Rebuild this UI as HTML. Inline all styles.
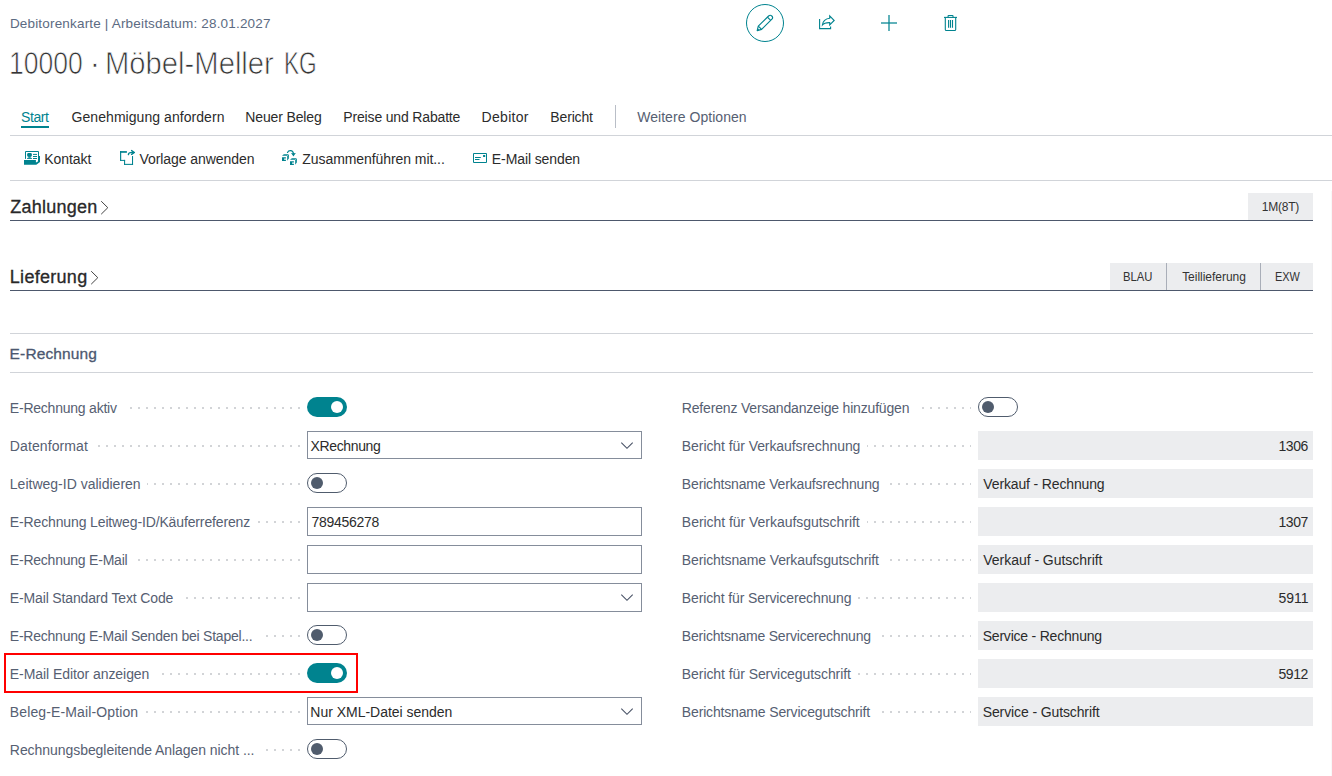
<!DOCTYPE html>
<html lang="de"><head><meta charset="utf-8"><title>Debitorenkarte</title>
<style>
html,body{margin:0;padding:0;background:#fff;}
body{width:1332px;height:776px;position:relative;overflow:hidden;font-family:"Liberation Sans",sans-serif;}
.t{position:absolute;white-space:nowrap;line-height:20px;margin:0;padding:0;}
.b{position:absolute;}
.ln{position:absolute;height:1px;}
.dots{position:absolute;height:2px;background-image:linear-gradient(to right,#d2d4d7 0,#d2d4d7 2px,transparent 2px,transparent 8px);background-size:8px 2px;background-repeat:repeat-x;}
.inp{position:absolute;box-sizing:border-box;border:1px solid #858d9b;background:#fff;height:28px;width:335px;}
.ro{position:absolute;background:#ecedef;height:29px;width:335px;}
.tg{position:absolute;box-sizing:border-box;width:40px;height:20px;border-radius:10px;}
.tg.on{background:#00838f;}
.tg.off{background:#fff;border:1px solid #505c6d;}
.tg i{position:absolute;width:12px;height:12px;border-radius:50%;top:4px;}
.tg.on i{background:#fff;left:24px;}
.tg.off i{background:#505c6d;left:3px;top:3px;}
.chip{position:absolute;background:#ecedef;}
svg{position:absolute;overflow:visible;}
</style></head><body>
<div class="ln" style="left:10px;top:135px;width:1322px;background:#d1d4d9"></div>
<div class="ln" style="left:10px;top:180px;width:1322px;background:#d1d4d9"></div>
<div class="b" style="left:1331px;top:191px;width:1px;height:585px;background:#f8f8f8"></div>
<div class="ln" style="left:10px;top:220px;width:1303px;background:#4d586c"></div>
<div class="ln" style="left:10px;top:290px;width:1303px;background:#4d586c"></div>
<div class="ln" style="left:10px;top:333px;width:1303px;background:#d1d4d9"></div>
<div class="ln" style="left:10px;top:372px;width:1303px;background:#d1d4d9"></div>
<div class="b" style="left:21px;top:126px;width:28px;height:2px;background:#00838f"></div>
<div class="b" style="left:615px;top:105px;width:1px;height:23px;background:#b9bec7"></div>
<div class="chip" style="left:1248px;top:193px;width:65px;height:27px"></div>
<div class="chip" style="left:1110px;top:263px;width:203px;height:27px"></div>
<div class="b" style="left:1166px;top:263px;width:1px;height:27px;background:#a9aeb8"></div>
<div class="b" style="left:1260px;top:263px;width:1px;height:27px;background:#a9aeb8"></div>
<div class="dots" style="left:124px;top:407px;width:176px;background-position:6px 0"></div>
<div class="dots" style="left:95px;top:445px;width:205px;background-position:3px 0"></div>
<div class="dots" style="left:147px;top:483px;width:153px;background-position:7px 0"></div>
<div class="dots" style="left:257px;top:521px;width:43px;background-position:1px 0"></div>
<div class="dots" style="left:134px;top:559px;width:166px;background-position:4px 0"></div>
<div class="dots" style="left:180px;top:597px;width:120px;background-position:6px 0"></div>
<div class="dots" style="left:264px;top:635px;width:36px;background-position:2px 0"></div>
<div class="dots" style="left:156px;top:673px;width:144px;background-position:6px 0"></div>
<div class="dots" style="left:144px;top:711px;width:156px;background-position:2px 0"></div>
<div class="dots" style="left:264px;top:749px;width:36px;background-position:2px 0"></div>
<div class="dots" style="left:916px;top:407px;width:55px;background-position:6px 0"></div>
<div class="dots" style="left:867px;top:445px;width:104px;background-position:7px 0"></div>
<div class="dots" style="left:886px;top:483px;width:85px;background-position:4px 0"></div>
<div class="dots" style="left:867px;top:521px;width:104px;background-position:7px 0"></div>
<div class="dots" style="left:886px;top:559px;width:85px;background-position:4px 0"></div>
<div class="dots" style="left:858px;top:597px;width:113px;background-position:0px 0"></div>
<div class="dots" style="left:877px;top:635px;width:94px;background-position:5px 0"></div>
<div class="dots" style="left:858px;top:673px;width:113px;background-position:0px 0"></div>
<div class="dots" style="left:877px;top:711px;width:94px;background-position:5px 0"></div>
<div class="tg on" style="left:307px;top:397px"><i></i></div>
<div class="tg off" style="left:307px;top:473px"><i></i></div>
<div class="tg off" style="left:307px;top:625px"><i></i></div>
<div class="tg on" style="left:307px;top:663px"><i></i></div>
<div class="tg off" style="left:307px;top:739px"><i></i></div>
<div class="tg off" style="left:978px;top:397px"><i></i></div>
<div class="inp" style="left:307px;top:431px;height:28px"></div>
<div class="inp" style="left:307px;top:507px;height:29px"></div>
<div class="inp" style="left:307px;top:545px;height:29px"></div>
<div class="inp" style="left:307px;top:583px;height:29px"></div>
<div class="inp" style="left:307px;top:697px;height:28px"></div>
<svg style="left:620.1px;top:441px" width="14" height="9" viewBox="0 0 14 9"><path d="M1.3,1.6 L7,7.3 L12.7,1.6" fill="none" stroke="#465064" stroke-width="1.05"/></svg>
<svg style="left:620.1px;top:593px" width="14" height="9" viewBox="0 0 14 9"><path d="M1.3,1.6 L7,7.3 L12.7,1.6" fill="none" stroke="#465064" stroke-width="1.05"/></svg>
<svg style="left:620.1px;top:707px" width="14" height="9" viewBox="0 0 14 9"><path d="M1.3,1.6 L7,7.3 L12.7,1.6" fill="none" stroke="#465064" stroke-width="1.05"/></svg>
<div class="ro" style="left:978px;top:431px"></div>
<div class="ro" style="left:978px;top:469px"></div>
<div class="ro" style="left:978px;top:507px"></div>
<div class="ro" style="left:978px;top:545px"></div>
<div class="ro" style="left:978px;top:583px"></div>
<div class="ro" style="left:978px;top:621px"></div>
<div class="ro" style="left:978px;top:659px"></div>
<div class="ro" style="left:978px;top:697px"></div>
<div class="b" style="left:4px;top:653px;width:354px;height:40px;box-sizing:border-box;border:2px solid #ff0000"></div>
<!-- header icons -->
<div class="b" style="left:746px;top:4px;width:38px;height:38px;box-sizing:border-box;border:1px solid #00838f;border-radius:50%"></div>
<svg style="left:757px;top:15px" width="16" height="16" viewBox="0 0 16 16"><g fill="none" stroke="#00838f" stroke-width="1.15" stroke-linejoin="round"><path d="M0.2,15.6 L1.3,11.1 L11.6,1.0 A2.3,2.3 0 0 1 14.9,4.2 L4.6,14.4 Z"/><path d="M1.3,11.1 L4.6,14.4"/><path d="M10.4,2.2 L13.7,5.4"/></g><path d="M0.2,15.6 L0.75,13.4 L2.4,15.0 Z" fill="#00838f"/></svg>
<svg style="left:819px;top:15px" width="16" height="15" viewBox="0 0 16 15"><g fill="none" stroke="#00838f" stroke-width="1.1" stroke-linejoin="miter"><path d="M0.6,4 V13.6 H11.6 V11.4"/><path d="M10.7,0.8 L15.2,5.5 L10.7,10.0 V7.6 C7.2,7.5 4.8,8.2 3.4,10.0 C3.6,6.4 6.6,3.5 10.7,3.3 Z"/></g></svg>
<svg style="left:880px;top:14px" width="18" height="18" viewBox="0 0 18 18"><g fill="none" stroke="#00838f" stroke-opacity="0.62" stroke-width="2"><path d="M1,9 H17"/><path d="M9,1 V17"/></g></svg>
<svg style="left:944px;top:15px" width="13" height="16" viewBox="0 0 13 16"><g fill="none" stroke="#00838f" stroke-width="1.1"><path d="M0,2.4 H13"/><path d="M4.1,2.4 V1 Q4.1,0.5 4.6,0.5 H8.5 Q9,0.5 9,1 V2.4"/><path d="M1.3,2.4 V14.4 Q1.3,15.5 2.4,15.5 H10.6 Q11.7,15.5 11.7,14.4 V2.4"/><path d="M4.6,5 V12.7 M6.5,5 V12.7 M8.5,5 V12.7"/></g></svg>
<!-- action icons -->
<svg style="left:24px;top:151px" width="16" height="14" viewBox="0 0 16 14"><path d="M1.5,7.9 V0.5 H14.5 V10" fill="none" stroke="#00838f" stroke-width="1"/><g fill="#00838f"><rect x="3.2" y="2.1" width="4.6" height="3.6" rx="1.2"/><rect x="4.3" y="5.2" width="2.4" height="1.6"/><rect x="3.1" y="6.9" width="4.8" height="1"/><rect x="9" y="2.9" width="4" height="1"/><rect x="9" y="5" width="4" height="1"/><rect x="9" y="7" width="4" height="1"/><path d="M0,9 H11.9 V11.2 H12.9 L15,9.3 V5 H16 V10.9 L12.3,13.8 H0 Z"/></g></svg>
<svg style="left:120px;top:150px" width="16" height="15" viewBox="0 0 16 15"><g fill="#00838f"><rect x="0" y="1.1" width="6.9" height="1.7"/><rect x="0.05" y="1.1" width="1.15" height="9.8"/><rect x="0.05" y="9.9" width="5.05" height="1"/><rect x="4.05" y="9.9" width="1.05" height="5"/><rect x="4.05" y="13.85" width="9" height="1.05"/><rect x="12" y="6.05" width="1.05" height="8.85"/></g><g fill="none" stroke="#00838f" stroke-width="1.4" stroke-linecap="round" stroke-linejoin="round"><path d="M8.4,4.6 Q8.6,2.6 10.6,2.6 H13.6"/><path d="M11.6,0.6 L14.4,2.5 L11.6,4.3"/></g></svg>
<svg style="left:282px;top:150px" width="16" height="15" viewBox="0 0 16 15"><g fill="#00838f"><path d="M0,5.7 L1.9,4.2 H5.7 Q6.9,4.2 6.9,5.4 L6.8,8.5 L5.2,10.7 V5.7 Z"/><path d="M0,7.2 H3.9 V8.5 H2.1 V9.7 H3.9 V10.9 H0 Z"/><path d="M8,9.7 L9.9,8.2 H13.7 Q14.9,8.2 14.9,9.4 L14.8,12.5 L13.2,14.7 V9.7 Z"/><path d="M8,11.2 H11.9 V12.5 H10.1 V13.7 H11.9 V14.9 H8 Z"/><path d="M9.1,3 L10.3,2.9 L11.4,4.1 L12.6,2.9 L13.8,3 L11.4,6.6 Z"/></g><circle cx="5.55" cy="5.45" r="0.45" fill="#fff"/><circle cx="13.55" cy="9.45" r="0.45" fill="#fff"/><path d="M5.5,2.4 C6.6,0.1 10.9,-0.3 11.4,3.4 V4.6" fill="none" stroke="#00838f" stroke-width="1.2" stroke-linecap="round"/></svg>
<svg style="left:473px;top:153px" width="14" height="10" viewBox="0 0 14 10"><path d="M0.5,0.5 H13.5 V9.5 H0.5 Z" fill="none" stroke="#00838f" stroke-width="1"/><rect x="10.1" y="2" width="2.1" height="2" fill="#00838f"/><path d="M2,4.5 H7.8 M2,6.5 H6.5" stroke="#00838f" stroke-width="1" fill="none"/></svg>
<!-- section chevrons -->
<svg style="left:100px;top:200px" width="10" height="16" viewBox="0 0 10 16"><path d="M1.2,1.2 L7.8,7.7 L1.2,14.2" fill="none" stroke="#444" stroke-width="1"/></svg>
<svg style="left:90px;top:270px" width="10" height="16" viewBox="0 0 10 16"><path d="M1.2,1.2 L7.8,7.7 L1.2,14.2" fill="none" stroke="#444" stroke-width="1"/></svg>

<span class="t" id="t0" style="left:9.90px;top:14.32px;font-size:13.5px;color:#5c6b82;letter-spacing:0.179px;">Debitorenkarte | Arbeitsdatum: 28.01.2027</span>
<span class="t" id="t1" style="left:8.82px;top:53.63px;font-size:30.8px;color:#353535;letter-spacing:0.000px;transform:scaleX(0.8620);transform-origin:0 0;-webkit-text-stroke:0.75px #fff;">10000</span>
<span class="t" id="t2" style="left:89.73px;top:53.63px;font-size:30.8px;color:#353535;letter-spacing:-6.299px;-webkit-text-stroke:0.6px #fff;">·</span>
<span class="t" id="t3" style="left:104.73px;top:53.63px;font-size:30.8px;color:#353535;letter-spacing:0.000px;transform:scaleX(0.9486);transform-origin:0 0;-webkit-text-stroke:0.75px #fff;">Möbel-Meller</span>
<span class="t" id="t4" style="left:283.92px;top:53.63px;font-size:30.8px;color:#353535;letter-spacing:0.000px;transform:scaleX(0.7357);transform-origin:0 0;-webkit-text-stroke:0.75px #fff;">KG</span>
<span class="t" id="t5" style="left:21.00px;top:107.15px;font-size:14px;color:#00838f;letter-spacing:-0.412px;">Start</span>
<span class="t" id="t6" style="left:71.59px;top:107.15px;font-size:14px;color:#2b2b2b;letter-spacing:0.056px;">Genehmigung anfordern</span>
<span class="t" id="t7" style="left:245.33px;top:107.15px;font-size:14px;color:#2b2b2b;letter-spacing:-0.144px;">Neuer Beleg</span>
<span class="t" id="t8" style="left:343.33px;top:107.15px;font-size:14px;color:#2b2b2b;letter-spacing:-0.166px;">Preise und Rabatte</span>
<span class="t" id="t9" style="left:481.52px;top:107.15px;font-size:14px;color:#2b2b2b;letter-spacing:0.310px;">Debitor</span>
<span class="t" id="t10" style="left:550.33px;top:107.15px;font-size:14px;color:#2b2b2b;letter-spacing:-0.155px;">Bericht</span>
<span class="t" id="t11" style="left:637.16px;top:107.15px;font-size:14px;color:#566072;letter-spacing:0.052px;">Weitere Optionen</span>
<span class="t" id="t12" style="left:44.33px;top:149.15px;font-size:14px;color:#2b2b2b;letter-spacing:-0.087px;">Kontakt</span>
<span class="t" id="t13" style="left:139.44px;top:149.15px;font-size:14px;color:#2b2b2b;letter-spacing:-0.060px;">Vorlage anwenden</span>
<span class="t" id="t14" style="left:302.37px;top:149.15px;font-size:14px;color:#2b2b2b;letter-spacing:-0.074px;">Zusammenführen mit...</span>
<span class="t" id="t15" style="left:491.85px;top:149.15px;font-size:14px;color:#2b2b2b;letter-spacing:-0.102px;">E-Mail senden</span>
<span class="t" id="t16" style="left:10.17px;top:196.76px;font-size:18px;color:#2b2b2b;letter-spacing:0.254px;-webkit-text-stroke:0.3px #212121;">Zahlungen</span>
<span class="t" id="t17" style="left:9.80px;top:266.76px;font-size:18px;color:#2b2b2b;letter-spacing:0.286px;-webkit-text-stroke:0.3px #212121;">Lieferung</span>
<span class="t" id="t18" style="left:9.62px;top:343.63px;font-size:15.5px;color:#4c5870;letter-spacing:0.134px;-webkit-text-stroke:0.3px #4c5870;">E-Rechnung</span>
<span class="t" id="t19" style="left:1261.83px;top:197.34px;font-size:12px;color:#333;letter-spacing:-0.245px;">1M(8T)</span>
<span class="t" id="t20" style="left:1123.48px;top:267.34px;font-size:12px;color:#333;letter-spacing:0.000px;transform:scaleX(0.9381);transform-origin:0 0;">BLAU</span>
<span class="t" id="t21" style="left:1182.15px;top:267.34px;font-size:12px;color:#333;letter-spacing:-0.019px;">Teillieferung</span>
<span class="t" id="t22" style="left:1274.63px;top:267.34px;font-size:12px;color:#333;letter-spacing:0.000px;transform:scaleX(0.9096);transform-origin:0 0;">EXW</span>
<span class="t" id="t23" style="left:9.84px;top:398.15px;font-size:14px;color:#566072;letter-spacing:-0.223px;">E-Rechnung aktiv</span>
<span class="t" id="t24" style="left:9.84px;top:436.15px;font-size:14px;color:#566072;letter-spacing:0.097px;">Datenformat</span>
<span class="t" id="t25" style="left:9.84px;top:474.15px;font-size:14px;color:#566072;letter-spacing:0.004px;">Leitweg-ID validieren</span>
<span class="t" id="t26" style="left:9.84px;top:512.15px;font-size:14px;color:#566072;letter-spacing:-0.134px;">E-Rechnung Leitweg-ID/Käuferreferenz</span>
<span class="t" id="t27" style="left:9.84px;top:550.15px;font-size:14px;color:#566072;letter-spacing:-0.224px;">E-Rechnung E-Mail</span>
<span class="t" id="t28" style="left:9.84px;top:588.15px;font-size:14px;color:#566072;letter-spacing:-0.149px;">E-Mail Standard Text Code</span>
<span class="t" id="t29" style="left:9.84px;top:626.15px;font-size:14px;color:#566072;letter-spacing:-0.232px;">E-Rechnung E-Mail Senden bei Stapel...</span>
<span class="t" id="t30" style="left:9.84px;top:664.15px;font-size:14px;color:#566072;letter-spacing:-0.062px;">E-Mail Editor anzeigen</span>
<span class="t" id="t31" style="left:9.84px;top:702.15px;font-size:14px;color:#566072;letter-spacing:0.126px;">Beleg-E-Mail-Option</span>
<span class="t" id="t32" style="left:9.84px;top:740.15px;font-size:14px;color:#566072;letter-spacing:-0.056px;">Rechnungsbegleitende Anlagen nicht ...</span>
<span class="t" id="t33" style="left:681.84px;top:398.15px;font-size:14px;color:#566072;letter-spacing:-0.178px;">Referenz Versandanzeige hinzufügen</span>
<span class="t" id="t34" style="left:681.84px;top:436.15px;font-size:14px;color:#566072;letter-spacing:-0.073px;">Bericht für Verkaufsrechnung</span>
<span class="t" id="t35" style="left:681.84px;top:474.15px;font-size:14px;color:#566072;letter-spacing:-0.162px;">Berichtsname Verkaufsrechnung</span>
<span class="t" id="t36" style="left:681.84px;top:512.15px;font-size:14px;color:#566072;letter-spacing:-0.037px;">Bericht für Verkaufsgutschrift</span>
<span class="t" id="t37" style="left:681.84px;top:550.15px;font-size:14px;color:#566072;letter-spacing:-0.123px;">Berichtsname Verkaufsgutschrift</span>
<span class="t" id="t38" style="left:681.84px;top:588.15px;font-size:14px;color:#566072;letter-spacing:-0.121px;">Bericht für Servicerechnung</span>
<span class="t" id="t39" style="left:681.84px;top:626.15px;font-size:14px;color:#566072;letter-spacing:-0.199px;">Berichtsname Servicerechnung</span>
<span class="t" id="t40" style="left:681.84px;top:664.15px;font-size:14px;color:#566072;letter-spacing:-0.074px;">Bericht für Servicegutschrift</span>
<span class="t" id="t41" style="left:681.84px;top:702.15px;font-size:14px;color:#566072;letter-spacing:-0.160px;">Berichtsname Servicegutschrift</span>
<span class="t" id="t42" style="left:310.62px;top:436.15px;font-size:14px;color:#2b2b2b;letter-spacing:-0.376px;">XRechnung</span>
<span class="t" id="t43" style="left:311.41px;top:512.15px;font-size:14px;color:#2b2b2b;letter-spacing:-0.270px;">789456278</span>
<span class="t" id="t44" style="left:310.33px;top:702.15px;font-size:14px;color:#2b2b2b;letter-spacing:-0.017px;">Nur XML-Datei senden</span>
<span class="t" id="t45" style="left:1278.38px;top:436.15px;font-size:14px;color:#2b2b2b;letter-spacing:-0.395px;">1306</span>
<span class="t" id="t46" style="left:983.32px;top:474.15px;font-size:14px;color:#2b2b2b;letter-spacing:-0.141px;">Verkauf - Rechnung</span>
<span class="t" id="t47" style="left:1278.38px;top:512.15px;font-size:14px;color:#2b2b2b;letter-spacing:-0.386px;">1307</span>
<span class="t" id="t48" style="left:983.32px;top:550.15px;font-size:14px;color:#2b2b2b;letter-spacing:-0.036px;">Verkauf - Gutschrift</span>
<span class="t" id="t49" style="left:1278.47px;top:588.15px;font-size:14px;color:#2b2b2b;letter-spacing:-0.051px;">5911</span>
<span class="t" id="t50" style="left:982.72px;top:626.15px;font-size:14px;color:#2b2b2b;letter-spacing:-0.212px;">Service - Rechnung</span>
<span class="t" id="t51" style="left:1278.47px;top:664.15px;font-size:14px;color:#2b2b2b;letter-spacing:-0.418px;">5912</span>
<span class="t" id="t52" style="left:982.72px;top:702.15px;font-size:14px;color:#2b2b2b;letter-spacing:-0.114px;">Service - Gutschrift</span>
</body></html>
